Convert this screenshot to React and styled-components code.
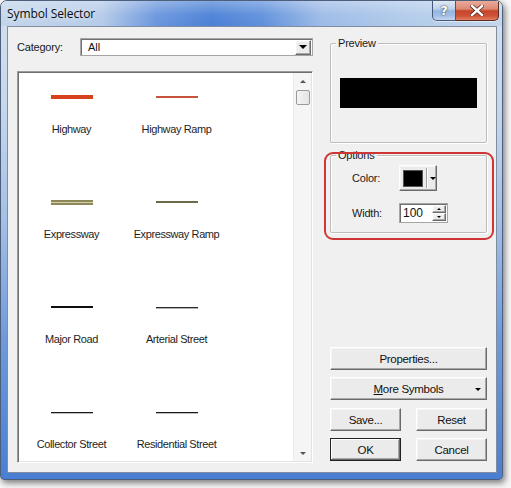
import React from 'react';
import styled, { createGlobalStyle } from 'styled-components';

const Global = createGlobalStyle`
  html, body { margin: 0; padding: 0; background: #f7f7f7; }
  body {
    width: 511px; height: 488px; overflow: hidden;
    font-family: "Liberation Sans", Arial, sans-serif;
    font-size: 11px; color: #111;
  }
`;

const Window = styled.div`
  width: 503px;
  height: 480px;
  box-sizing: border-box;
  border: 1px solid #4d5f7a;
  border-radius: 7px 7px 4px 4px;
  background: linear-gradient(180deg, #d4e0ee 0%, #c6d7ec 22%, #a6c1e6 45%, #6f9bdc 70%, #4a7ed2 100%);
  box-shadow: 2px 3px 6px rgba(0, 0, 0, 0.5);
  display: flex;
  flex-direction: column;
  overflow: hidden;
`;

const TitleBar = styled.div`
  height: 25px;
  flex: none;
  display: flex;
  align-items: flex-start;
  justify-content: space-between;
  padding: 0 3px 0 6px;
  background:
    linear-gradient(180deg, rgba(255,255,255,0.3) 0%, rgba(255,255,255,0.05) 55%, rgba(255,255,255,0) 100%),
    linear-gradient(90deg, #c3d5ea 0%, #b5cbe9 20%, #6a96dd 31%, #4a80d5 42%, #5f90db 52%, #9dbbe7 64%, #b0caea 80%, #c4d6eb 100%);
`;

const Caption = styled.div`
  font-family: "Open Sans", "Liberation Sans", sans-serif;
  font-size: 12px;
  line-height: 25px;
  color: #0c0c0c;
  letter-spacing: -0.1px;
  text-shadow: 0 0 6px rgba(255,255,255,0.9);
`;

const CaptionButtons = styled.div`
  display: flex;
  height: 20px;
  box-shadow: 0 1px 0 rgba(255,255,255,0.5);
  border-radius: 0 0 5px 5px;
`;

const CapButton = styled.div`
  width: ${p => p.$w}px;
  height: 20px;
  box-sizing: border-box;
  display: flex;
  align-items: center;
  justify-content: center;
  border: 1px solid ${p => (p.$close ? '#5a2b22' : '#45597a')};
  border-top: none;
  border-left-width: ${p => (p.$close ? 0 : 1)}px;
  border-radius: ${p => (p.$close ? '0 0 5px 0' : '0 0 0 5px')};
  background: ${p =>
    p.$close
      ? 'linear-gradient(180deg, #e9ab9a 0%, #dc8a74 42%, #c7442a 52%, #cf5538 80%, #e08066 100%)'
      : 'linear-gradient(180deg, #dfe8f4 0%, #bfd1ea 42%, #94b4e0 52%, #a6c1e7 80%, #c3d6ee 100%)'};
  color: #fff;
  font-family: "DejaVu Sans", sans-serif;
  font-weight: bold;
  font-size: 13px;
  text-shadow: 0 0 2px #3a4c66, 0 0 1px #3a4c66;
`;

const Client = styled.div`
  flex: 1;
  min-height: 0;
  overflow: hidden;
  margin: 0 5px 6px 6px;
  border: 1px solid rgba(55, 75, 105, 0.6);
  background: #f0f0f0;
  display: flex;
  gap: 17px;
  padding: 0 9px;
`;

const LeftCol = styled.div`
  width: 296px;
  min-height: 0;
  display: flex;
  flex-direction: column;
  padding: 11px 0 9px;
  box-sizing: border-box;
`;

const CategoryRow = styled.div`
  height: 18px;
  flex: none;
  display: flex;
  align-items: center;
`;

const Label = styled.span`
  width: ${p => p.$w || 'auto'};
  flex: none;
  color: #1a1a1a;
  font-size: 11px;
  letter-spacing: -0.2px;
`;

const Combo = styled.div`
  flex: 1;
  height: 18px;
  box-sizing: border-box;
  border: 1px solid #a5a5a5;
  box-shadow: inset 1px 1px #707070;
  background: #fff;
  display: flex;
  align-items: center;
  padding-left: 7px;
  padding-right: 1px;
`;

const ComboText = styled.span`
  flex: 1;
  font-size: 11px;
`;

const ClassicButton = styled.div`
  box-sizing: border-box;
  background: #ebebeb;
  border: 1px solid;
  border-color: #ffffff #6a6a6a #6a6a6a #ffffff;
  box-shadow: inset -1px -1px #a8a8a8, inset 1px 1px #f4f4f4;
  display: flex;
  align-items: center;
  justify-content: center;
`;

const DropBtn = styled(ClassicButton)`
  width: 16px;
  height: 15px;
`;

const Tri = styled.span`
  width: 0;
  height: 0;
  border-left: ${p => p.$s || 3}px solid transparent;
  border-right: ${p => p.$s || 3}px solid transparent;
  ${p => (p.$up ? 'border-bottom' : 'border-top')}: ${p => p.$s || 3}px solid ${p => p.$c || '#000'};
`;

const ListBox = styled.div`
  flex: 1;
  min-height: 0;
  margin-top: 15px;
  box-sizing: border-box;
  border: 1px solid;
  border-color: #9a9a9a #ffffff #ffffff #9a9a9a;
  box-shadow: inset 1px 1px #6f6f6f, inset -1px -1px #e3e3e3;
  background: #fff;
  display: flex;
  overflow: hidden;
`;

const Items = styled.div`
  flex: 1;
  min-height: 0;
  padding-left: 1px;
  display: grid;
  grid-template-columns: repeat(2, 105px);
  grid-auto-rows: 105px;
  align-content: start;
  overflow: hidden;
`;

const Cell = styled.div`
  display: flex;
  flex-direction: column;
  align-items: center;
`;

const SwatchBox = styled.div`
  height: 10px;
  margin-top: 20px;
  display: flex;
  align-items: center;
`;

const Swatch = styled.div`
  width: 42px;
  height: ${p => p.$h}px;
  background: ${p => p.$c};
  box-sizing: border-box;
  ${p => (p.$edge ? `border-top: 2px solid ${p.$edge}; border-bottom: 2px solid ${p.$edge};` : '')}
  ${p => (p.$soft ? `box-shadow: 0 1px 0 ${p.$soft};` : '')}
`;

const ItemLabel = styled.div`
  margin-top: 21px;
  font-size: 11px;
  line-height: 13px;
  letter-spacing: -0.4px;
  color: #1e1e1e;
  white-space: nowrap;
`;

const ScrollBar = styled.div`
  width: 17px;
  flex: none;
  background: #f5f5f5;
  border-left: 1px solid #ececec;
  display: flex;
  flex-direction: column;
  align-items: center;
  margin: 1px 1px 1px 0;
`;

const ArrowArea = styled.div`
  height: 16px;
  width: 100%;
  display: flex;
  align-items: center;
  justify-content: center;
`;

const Thumb = styled.div`
  width: 14px;
  height: 15px;
  box-sizing: border-box;
  margin-top: 1px;
  border: 1px solid #9a9a9a;
  border-radius: 2px;
  background: linear-gradient(90deg, #f4f4f4, #e4e4e4);
`;

const Spacer = styled.div`
  flex: 1;
`;

const RightCol = styled.div`
  width: 157px;
  min-height: 0;
  display: flex;
  flex-direction: column;
  padding: 16px 0 11px;
  box-sizing: border-box;
`;

const Group = styled.div`
  position: relative;
  flex: none;
  height: ${p => p.$h}px;
  margin-top: ${p => p.$mt || 0}px;
  box-sizing: border-box;
  border: 1px solid #bdbdbd;
  box-shadow: inset 1px 1px #ffffff, 1px 1px #ffffff;
  border-radius: 2px;
`;

const Legend = styled.span`
  position: absolute;
  left: 5px;
  top: -8px;
  padding: 0 2px;
  background: #f0f0f0;
  font-size: 11px;
  line-height: 14px;
  color: #1a1a1a;
  letter-spacing: -0.2px;
`;

const PreviewBar = styled.div`
  width: 137px;
  height: 30px;
  margin: 34px auto 0;
  background: #000;
`;

const OptionsGrid = styled.div`
  display: grid;
  grid-template-columns: 47px auto;
  grid-template-rows: 26px 20px;
  row-gap: 12px;
  align-items: center;
  justify-items: start;
  padding: 9px 0 0 21px;
`;

const ColorBtn = styled(ClassicButton)`
  width: 38px;
  height: 26px;
  justify-content: flex-start;
  padding-left: 3px;
`;

const ColorChip = styled.div`
  width: 20px;
  height: 17px;
  background: #000;
  border: 1px solid #555;
  box-sizing: border-box;
`;

const Sep = styled.div`
  width: 1px;
  height: 20px;
  margin: 0 3px;
  background: #a0a0a0;
  box-shadow: 1px 0 #fff;
`;

const Spinner = styled.div`
  display: flex;
  height: 20px;
  width: 49px;
  box-sizing: border-box;
  border: 1px solid #a5a5a5;
  box-shadow: inset 1px 1px #707070;
  background: #fff;
`;

const SpinText = styled.div`
  flex: 1;
  padding-left: 3px;
  font-size: 12px;
  line-height: 18px;
`;

const SpinBtns = styled.div`
  width: 15px;
  display: flex;
  flex-direction: column;
  padding: 1px 1px 1px 0;
  box-sizing: border-box;
`;

const SpinHalf = styled(ClassicButton)`
  flex: 1;
`;

const Annotation = styled.div`
  position: absolute;
  left: -7px;
  top: -4px;
  width: 170px;
  height: 88px;
  box-sizing: border-box;
  border: 2px solid #cf3535;
  border-radius: 9px;
  pointer-events: none;
`;

const Buttons = styled.div`
  margin-top: auto;
  display: flex;
  flex-direction: column;
`;

const Btn = styled(ClassicButton)`
  height: 23px;
  margin-top: ${p => p.$mt || 0}px;
  font-size: 11.5px;
  letter-spacing: -0.3px;
  color: #111;
  position: relative;
  ${p =>
    p.$default
      ? 'border-color: #222; box-shadow: inset -1px -1px #6a6a6a, inset 1px 1px #ffffff, inset -2px -2px #a8a8a8;'
      : ''}
`;

const BtnRow = styled.div`
  display: grid;
  grid-template-columns: 1fr 1fr;
  column-gap: 15px;
  margin-top: ${p => p.$mt || 0}px;
`;

const MenuArrow = styled.span`
  position: absolute;
  right: 5px;
  top: 10px;
  display: flex;
`;

const Under = styled.span`
  text-decoration: underline;
`;

const items = [
  { name: 'Highway', sw: { $h: 4, $c: '#d7411e' } },
  { name: 'Highway Ramp', sw: { $h: 2, $c: '#c5543a' } },
  { name: 'Expressway', sw: { $h: 5, $c: '#d4cfa6', $edge: '#8d8859' } },
  { name: 'Expressway Ramp', sw: { $h: 2, $c: '#6e6a47' } },
  { name: 'Major Road', sw: { $h: 2, $c: '#0d0d0d' } },
  { name: 'Arterial Street', sw: { $h: 1, $c: '#2a2a2a', $soft: 'rgba(0,0,0,0.3)' } },
  { name: 'Collector Street', sw: { $h: 1, $c: '#1a1a1a', $soft: 'rgba(0,0,0,0.25)' } },
  { name: 'Residential Street', sw: { $h: 1, $c: '#1a1a1a', $soft: 'rgba(0,0,0,0.25)' } },
];

export default function App() {
  return (
    <>
      <Global />
      <Window>
        <TitleBar>
          <Caption>Symbol Selector</Caption>
          <CaptionButtons>
            <CapButton $w={24}>?</CapButton>
            <CapButton $w={43} $close>
              <svg width="14" height="11" viewBox="0 0 14 11">
                <path d="M2 1 L12 10 M12 1 L2 10" stroke="#5a2a20" strokeWidth="4" strokeLinecap="square" />
                <path d="M2 1 L12 10 M12 1 L2 10" stroke="#ffffff" strokeWidth="2.4" strokeLinecap="square" />
              </svg>
            </CapButton>
          </CaptionButtons>
        </TitleBar>
        <Client>
          <LeftCol>
            <CategoryRow>
              <Label $w="63px">Category:</Label>
              <Combo>
                <ComboText>All</ComboText>
                <DropBtn>
                  <Tri $s={4} />
                </DropBtn>
              </Combo>
            </CategoryRow>
            <ListBox>
              <Items>
                {items.map(it => (
                  <Cell key={it.name}>
                    <SwatchBox>
                      <Swatch {...it.sw} />
                    </SwatchBox>
                    <ItemLabel>{it.name}</ItemLabel>
                  </Cell>
                ))}
              </Items>
              <ScrollBar>
                <ArrowArea>
                  <Tri $up $s={3} $c="#555" />
                </ArrowArea>
                <Thumb />
                <Spacer />
                <ArrowArea>
                  <Tri $s={3} $c="#555" />
                </ArrowArea>
              </ScrollBar>
            </ListBox>
          </LeftCol>
          <RightCol>
            <Group $h={100}>
              <Legend>Preview</Legend>
              <PreviewBar />
            </Group>
            <Group $h={78} $mt={12}>
              <Legend>Options</Legend>
              <OptionsGrid>
                <Label>Color:</Label>
                <ColorBtn>
                  <ColorChip />
                  <Sep />
                  <Tri $s={3} />
                </ColorBtn>
                <Label>Width:</Label>
                <Spinner>
                  <SpinText>100</SpinText>
                  <SpinBtns>
                    <SpinHalf>
                      <Tri $up $s={2} />
                    </SpinHalf>
                    <SpinHalf>
                      <Tri $s={2} />
                    </SpinHalf>
                  </SpinBtns>
                </Spinner>
              </OptionsGrid>
              <Annotation />
            </Group>
            <Buttons>
              <Btn>Properties...</Btn>
              <Btn $mt={7}>
                <span>
                  <Under>M</Under>ore Symbols
                </span>
                <MenuArrow>
                  <Tri $s={3} />
                </MenuArrow>
              </Btn>
              <BtnRow $mt={8}>
                <Btn>Save...</Btn>
                <Btn>Reset</Btn>
              </BtnRow>
              <BtnRow $mt={7}>
                <Btn $default>OK</Btn>
                <Btn>Cancel</Btn>
              </BtnRow>
            </Buttons>
          </RightCol>
        </Client>
      </Window>
    </>
  );
}
